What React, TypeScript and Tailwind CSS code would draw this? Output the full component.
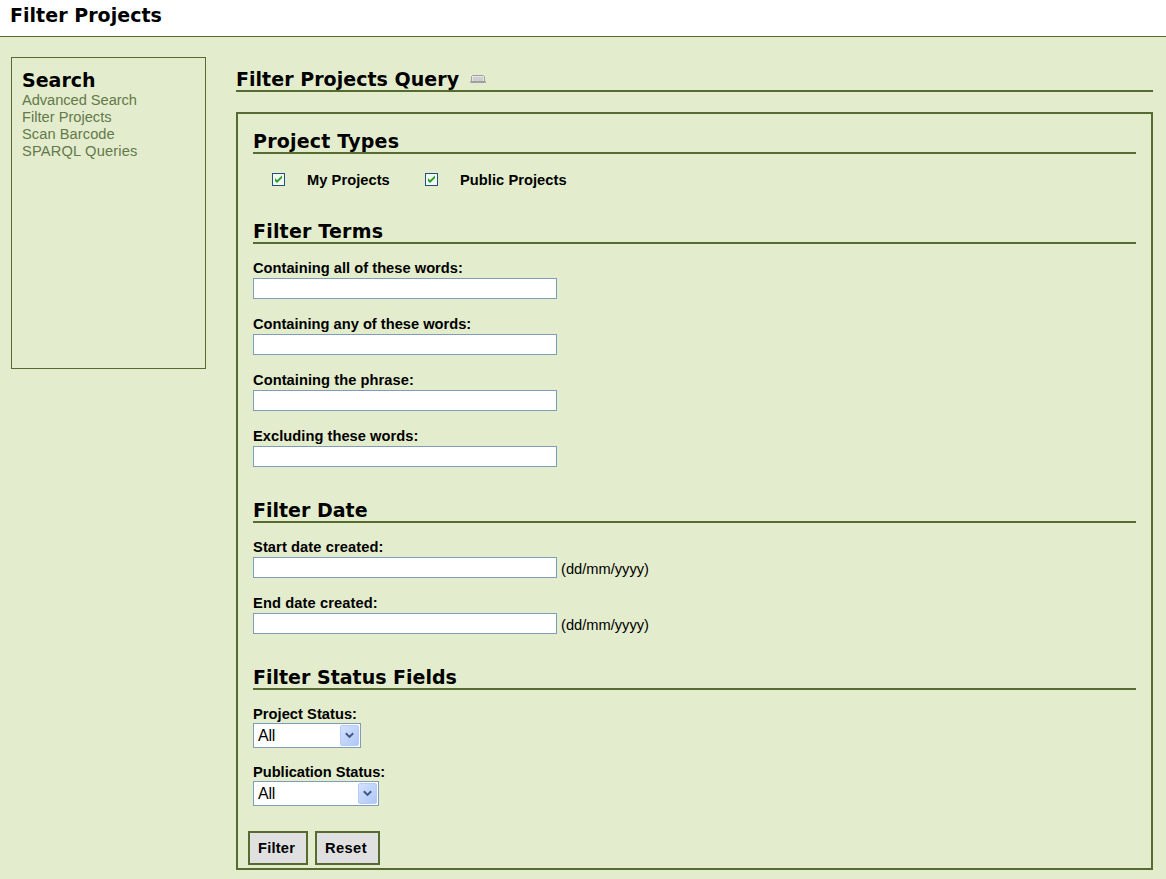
import type { ReactNode } from 'react';

const headingFont = "font-['DejaVu_Sans',sans-serif] font-bold text-black whitespace-nowrap";

function SectionHeading({ children, spacing }: { children: string; spacing: string }) {
  return (
    <h2 className={`${headingFont} h-[26px] border-b-2 border-[#556b2f] text-[19px] leading-[26px] ${spacing}`}>
      {children}
    </h2>
  );
}

function Field({ label, spacing, note }: { label: string; spacing: string; note?: string }) {
  return (
    <div className="h-14">
      <label className={`block h-[18px] whitespace-nowrap font-bold leading-4 ${spacing}`}>
        {label}
      </label>
      <div className="flex h-[21px] items-start">
        <input aria-label={label} className="block h-[21px] w-[304px] border border-[#7f9db9] bg-white px-1 outline-none" />
        {note && <span className="ml-1 mt-1 leading-[17px]">{note}</span>}
      </div>
    </div>
  );
}

function SelectField({ label, width, spacing }: { label: string; width: string; spacing: string }) {
  return (
    <div className="h-[58px]">
      <div className={`h-[18px] whitespace-nowrap font-bold leading-[18px] ${spacing}`}>{label}</div>
      <button className={`flex h-[25px] items-center justify-between border border-[#7f9db9] bg-white pl-1 pr-px text-left ${width}`}>
        <span className="text-base leading-[23px] tracking-[-0.2px]">All</span>
        <span className="flex h-[21px] w-[19px] items-center justify-center rounded-[2px] border border-[#b7cbf5] bg-linear-to-br from-[#d3e1ff] to-[#afc7f6]">
          <svg width="9" height="7" viewBox="0 0 9 7" fill="none" stroke="#435983" strokeWidth="2">
            <path d="M0.8 1.2 4.5 4.9 8.2 1.2" />
          </svg>
        </span>
      </button>
    </div>
  );
}

function CheckItem({ children, spacing }: { children: ReactNode; spacing: string }) {
  return (
    <div className="flex items-start">
      <svg className="mt-0.5" width="13" height="13" viewBox="0 0 13 13" role="checkbox" aria-checked="true">
        <rect x="0.5" y="0.5" width="12" height="12" fill="#f5f7f2" stroke="#1d5281" />
        <path d="M3 5v3l2 2 5-5V2.5L5 7.3Z" fill="#21a121" />
      </svg>
      <span className={`ml-[22px] mt-px whitespace-nowrap font-bold leading-[17px] ${spacing}`}>{children}</span>
    </div>
  );
}

export default function App() {
  return (
    <div className="flex h-[879px] w-[1166px] flex-col overflow-hidden bg-[#e3edcd] font-['Liberation_Sans',Arial,sans-serif] text-[14.67px] text-black">
      <header className="h-[37px] shrink-0 border-b border-[#556b2f] bg-white pl-[10px]">
        <h1 className={`${headingFont} text-[19px] leading-[30px] tracking-[0.04px]`}>Filter Projects</h1>
      </header>
      <div className="flex items-start">
        <aside className="ml-[11px] mt-5 h-[312px] w-[195px] shrink-0 border border-[#556b2f] pl-[10px] pt-[10px] text-[#64784a]">
          <h2 className={`${headingFont} h-6 text-[19px] leading-6`}>Search</h2>
          <nav className="flex flex-col leading-[17px]">
            <a className="tracking-[-0.05px]">Advanced Search</a>
            <a className="tracking-[0px]">Filter Projects</a>
            <a className="tracking-[0.06px]">Scan Barcode</a>
            <a className="tracking-[0.17px]">SPARQL Queries</a>
          </nav>
        </aside>
        <main className="ml-[30px] w-[917px] pt-[29px]">
          <div className="flex h-[26px] items-start border-b-2 border-[#556b2f]">
            <h2 className={`${headingFont} text-[19px] leading-[26px] tracking-[0.04px]`}>Filter Projects Query</h2>
            <svg className="ml-[11px] mt-[9px]" width="16" height="9" viewBox="0 0 16 9">
              <path d="M1.5 6.5v-5l1-1h11l1 1v5" fill="#e6e6e6" stroke="#a0a0a0" />
              <path d="M3 2h10v4H3Z" fill="#cecece" />
              <path d="M0.5 6.5h15v1h-15Z" fill="#ddd" stroke="#a0a0a0" />
            </svg>
          </div>
          <form className="mt-5 h-[758px] border-2 border-[#556b2f] px-[15px] pt-[14px]" onSubmit={(e) => e.preventDefault()}>
            <SectionHeading spacing="tracking-[0.2px]">Project Types</SectionHeading>
            <div className="flex h-16 items-start pl-[19px] pt-[17px]">
              <div className="w-[153px]"><CheckItem spacing="tracking-[0.05px]">My Projects</CheckItem></div>
              <CheckItem spacing="tracking-[0.05px]">Public Projects</CheckItem>
            </div>
            <SectionHeading spacing="tracking-[0.2px]">Filter Terms</SectionHeading>
            <div className="h-[253px] pt-4">
              <Field label="Containing all of these words:" spacing="tracking-[0.02px]" />
              <Field label="Containing any of these words:" spacing="tracking-[0px]" />
              <Field label="Containing the phrase:" spacing="tracking-[0.06px]" />
              <Field label="Excluding these words:" spacing="tracking-[0.04px]" />
            </div>
            <SectionHeading spacing="tracking-[0px]">Filter Date</SectionHeading>
            <div className="h-[141px] pt-4">
              <Field label="Start date created:" spacing="tracking-[0.1px]" note="(dd/mm/yyyy)" />
              <Field label="End date created:" spacing="tracking-[0.11px]" note="(dd/mm/yyyy)" />
            </div>
            <SectionHeading spacing="tracking-[0px]">Filter Status Fields</SectionHeading>
            <div className="h-[141px] pt-[15px]">
              <SelectField label="Project Status:" width="w-[108px]" spacing="tracking-[0.04px]" />
              <SelectField label="Publication Status:" width="w-[126px]" spacing="tracking-[-0.03px]" />
            </div>
            <div className="-ml-[5px] flex gap-[7px]">
              <button className="h-[34px] w-[60px] border-2 border-[#556b2f] bg-[#e0e0e0] pl-2 text-left font-bold tracking-[0.2px]">Filter</button>
              <button className="h-[34px] w-[65px] border-2 border-[#556b2f] bg-[#e0e0e0] pl-2 text-left font-bold tracking-[0.4px]">Reset</button>
            </div>
          </form>
        </main>
      </div>
    </div>
  );
}
